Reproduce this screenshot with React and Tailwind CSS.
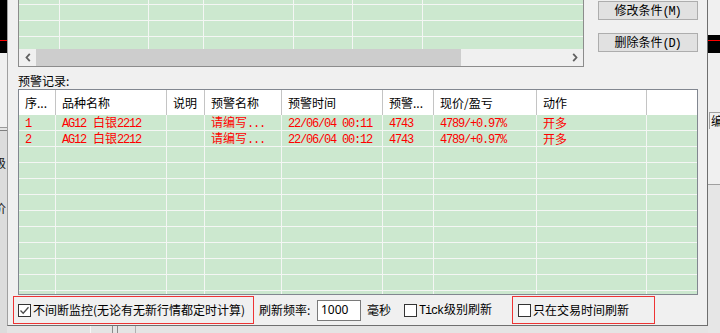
import React from 'react';

// ascii runs get a narrow mono face, like the old bitmap SimSun ascii
const Mix = ({ t }) => (
  <span className="whitespace-pre">
    {t.split(/([\x20-\x7e]+)/).filter(Boolean).map((s, i) =>
      /^[\x20-\x7e]+$/.test(s) ? (
        <span key={i} className="font-['Liberation_Mono',monospace] tracking-[-1.2px] pr-[1px]">{s}</span>
      ) : (
        <span key={i}>{s}</span>
      )
    )}
  </span>
);

const Check = ({ checked }) => (
  <div className="w-[13px] h-[13px] shrink-0 border border-[#333333] bg-white flex items-center justify-center">
    {checked && (
      <svg width="11" height="11" viewBox="0 0 11 11">
        <path d="M1.5 5.5 L4.2 8.3 L9.5 2.2" stroke="#4a4a4a" strokeWidth="1.3" fill="none" />
      </svg>
    )}
  </div>
);

const Btn = ({ label }) => (
  <div className="h-[19px] border border-[#adadad] bg-[#e1e1e1] flex items-center justify-center text-[12px] leading-[14px] whitespace-nowrap">
    <Mix t={label} />
  </div>
);

const gridCols = ['w-[41px]', 'w-[89px]', 'w-[55px]', 'w-[90px]', 'w-[59px]', 'w-[70px]', 'flex-1'];
const gridRows = ['h-[5px] border-b', 'h-[16px] border-b', 'h-[16px] border-b', 'flex-1'];

const listCols = ['w-[37px]', 'w-[111px]', 'w-[38px]', 'w-[77px]', 'w-[101px]', 'w-[51px]', 'w-[103px]', 'w-[110px]', 'flex-1'];
const headers = ['序...', '品种名称', '说明', '预警名称', '预警时间', '预警...', '现价/盈亏', '动作', ''];
const records = [
  ['1', 'AG12 白银2212', '', '请编写...', '22/06/04 00:11', '4743', '4789/+0.97%', '开多', ''],
  ['2', 'AG12 白银2212', '', '请编写...', '22/06/04 00:12', '4743', '4789/+0.97%', '开多', ''],
];
const rows = [...records, ...Array.from({ length: 10 }, () => Array(9).fill(''))];

const Chevron = ({ dir }) => (
  <svg width="6" height="9" viewBox="0 0 6 9">
    <path d={dir === 'l' ? 'M4.8 0.8 L1.5 4.5 L4.8 8.2' : 'M1.2 0.8 L4.5 4.5 L1.2 8.2'} stroke="#606060" strokeWidth="1.8" fill="none" />
  </svg>
);

export default function App() {
  return (
    <div className="w-[720px] h-[333px] overflow-hidden flex bg-[#f0f0f0] text-black font-['Noto_Sans_CJK_SC',sans-serif]">
      {/* background app, left edge */}
      <div className="w-[7px] h-full flex flex-col overflow-hidden">
        <div className="h-[53px] shrink-0 bg-black flex flex-col">
          <div className="h-[40px]" />
          <div className="h-px bg-[#ff0000]" />
        </div>
        <div className="h-[75px] shrink-0 bg-[#f0f0f0] border-b border-[#9a9a9a]" />
        <div className="h-[3px] shrink-0 bg-[#e4e4e4] border-b border-[#808080]" />
        <div className="flex-1 bg-[#dcdcdc] flex flex-col text-[12px] leading-[12px] text-[#222]">
          <span className="mt-[26px] -ml-[6px] whitespace-nowrap">级</span>
          <span className="mt-[33px] -ml-[6px] whitespace-nowrap">价</span>
        </div>
      </div>

      <div className="w-[701px] h-full flex flex-col">
        {/* dialog */}
        <div className="h-[326px] shrink-0 flex flex-col border-l border-r border-b border-l-[#a0a0a0] border-r-[#6f6f6f] border-b-[#6f6f6f] bg-[#f0f0f0]">
          {/* condition grid + buttons */}
          <div className="h-[67px] shrink-0 flex pl-[10px]">
            <div className="w-[566px] flex flex-col border-l border-r border-b border-[#8c8c8c]">
              <div className="h-[49px] flex flex-col bg-[#cce8cf]">
                {gridRows.map((r, i) => (
                  <div key={i} className={`flex border-[#f4f6f4] ${r}`}>
                    {gridCols.map((c, j) => (
                      <div key={j} className={`${c} ${j < gridCols.length - 1 ? 'border-r border-[#f4f6f4]' : ''}`} />
                    ))}
                  </div>
                ))}
              </div>
              <div className="h-[17px] flex bg-[#f0f0f0]">
                <div className="w-[17px] flex items-center justify-center">
                  <Chevron dir="l" />
                </div>
                <div className="w-[425px] bg-[#cdcdcd]" />
                <div className="flex-1" />
                <div className="w-[17px] flex items-center justify-center">
                  <Chevron dir="r" />
                </div>
              </div>
            </div>
            <div className="w-[100px] ml-[14px] flex flex-col pt-[1px]">
              <Btn label="修改条件(M)" />
              <div className="mt-[13px]">
                <Btn label="删除条件(D)" />
              </div>
            </div>
          </div>

          {/* label */}
          <div className="h-[22px] shrink-0 pl-[10px] pt-[7px] text-[12px] leading-[14px]">预警记录:</div>

          {/* alert records */}
          <div className="h-[206px] shrink-0 ml-[10px] w-[680px] border border-[#828790] flex flex-col overflow-hidden">
            <div className="h-[25px] shrink-0 flex bg-white">
              {headers.map((h, j) => (
                <div
                  key={j}
                  className={`${listCols[j]} flex items-center pl-[6px] text-[12px] leading-[14px] whitespace-nowrap ${j < headers.length - 1 ? 'border-r border-[#c4c4c4]' : ''}`}
                >
                  {h}
                </div>
              ))}
            </div>
            <div className="flex-1 bg-[#cce8cf] overflow-hidden">
              {rows.map((r, i) => (
                <div key={i} className="h-[16px] flex border-b border-[#f4f6f4]">
                  {r.map((v, j) => (
                    <div
                      key={j}
                      className={`${listCols[j]} flex items-center pl-[6px] text-[12px] leading-[15px] text-[#ff0000] whitespace-nowrap ${j < r.length - 1 ? 'border-r border-[#f4f6f4]' : ''}`}
                    >
                      {v && <Mix t={v} />}
                    </div>
                  ))}
                </div>
              ))}
            </div>
          </div>

          {/* bottom options */}
          <div className="h-[30px] shrink-0 flex items-center pl-[5px] text-[12px] leading-[14px] whitespace-nowrap">
            <div className="w-[241px] h-[28px] border border-[#ee3434] flex items-center pl-[4px]">
              <Check checked />
              <span className="ml-[2px]">不间断监控(无论有无新行情都定时计算)</span>
            </div>
            <span className="ml-[5px] w-[58px]">刷新频率:</span>
            <div className="w-[44px] h-[21px] border border-[#7a7a7a] bg-white flex items-center pl-[3px] font-['Noto_Sans',sans-serif]">
              1000
            </div>
            <span className="ml-[6px] w-[37px]">毫秒</span>
            <div className="w-[108px] flex items-center">
              <Check />
              <span className="ml-[2px]">
                <Mix t="Tick级别刷新" />
              </span>
            </div>
            <div className="w-[143px] h-[28px] border border-[#ee3434] flex items-center pl-[5px]">
              <Check />
              <span className="ml-[2px]">只在交易时间刷新</span>
            </div>
          </div>
        </div>

        {/* background app below dialog */}
        <div className="flex-1 flex bg-[#e4e4e4]">
          <div className="w-[83px]" />
          <div className="w-[22px] border-l border-[#f6f6f6]" />
          <div className="w-[5px] border-l border-[#8a8a8a]" />
          <div className="w-[18px] border-l border-[#8a8a8a]" />
          <div className="flex-1 border-l border-[#b0b0b0]" />
        </div>
      </div>

      {/* background app, right edge */}
      <div className="w-[12px] h-full flex flex-col overflow-hidden">
        <div className="h-[35px] shrink-0 bg-[#f0f0f0]" />
        <div className="h-[18px] shrink-0 bg-black flex flex-col">
          <div className="h-[5px]" />
          <div className="h-px bg-[#ff0000]" />
        </div>
        <div className="h-[59px] shrink-0 bg-[#f0f0f0]" />
        <div className="h-[17px] shrink-0 ml-[1px] border-t border-l border-[#a0a0a0] bg-[#f0f0f0] pl-[1px] text-[12px] leading-[16px] whitespace-nowrap">
          编
        </div>
        <div className="h-[56px] shrink-0 bg-[#f0f0f0] border-b border-[#a0a0a0]" />
        <div className="flex-1 bg-[#e6e6e6]" />
      </div>
    </div>
  );
}
